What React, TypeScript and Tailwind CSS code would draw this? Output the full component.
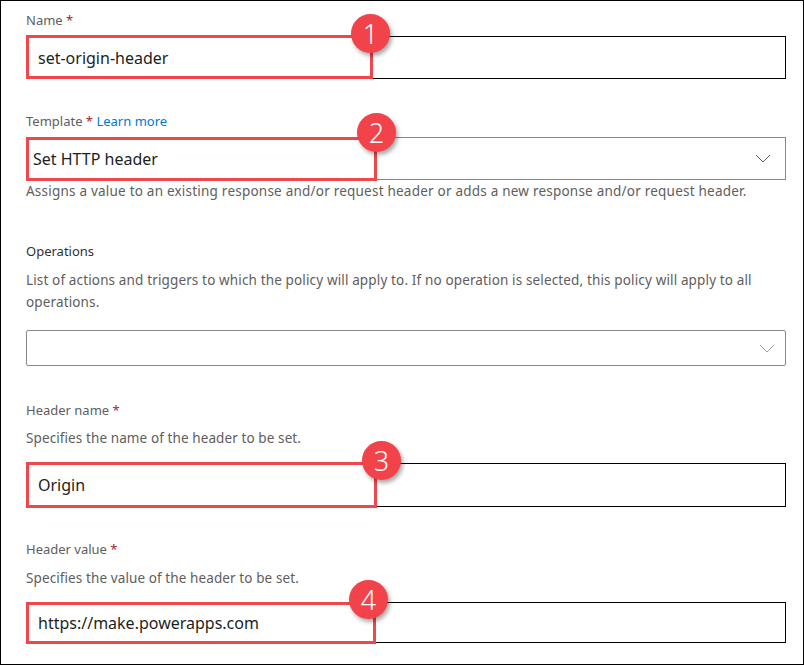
import type { ReactNode } from 'react'

const font = { fontFamily: '"Noto Sans", "Open Sans", Arial, sans-serif' }

function Chevron() {
  return (
    <svg width="16" height="9" viewBox="0 0 16 9" fill="none" className="text-[#605e5c]">
      <polyline points="1,1 8,8 15,1" stroke="currentColor" strokeWidth="1" />
    </svg>
  )
}

function Badge({ n, className }: { n: number; className: string }) {
  return (
    <div
      className={`absolute flex h-[39px] w-[39px] items-center justify-center rounded-full bg-[#f2434a] text-[27px] font-light leading-none text-white shadow-[2px_3px_4px_rgba(0,0,0,0.35)] ${className}`}
    >
      {n}
    </div>
  )
}

function Label({ text, required, children, className = '' }: { text: string; required?: boolean; children?: ReactNode; className?: string }) {
  return (
    <div className={`h-5 text-[13px] leading-5 text-[#605e5c] ${className}`}>
      {text}
      {required && <span className="text-[#a4262c]"> *</span>}
      {children}
    </div>
  )
}

export default function App() {
  return (
    <div style={font} className="box-border h-[665px] w-[804px] border border-black bg-white pl-[25px] pr-[17px] pt-[9px]">
      <Label text="Name" required />
      <div className="relative mt-[6px]">
        <div className="flex h-[43px] items-center border border-black px-[11px] text-[16px] text-[#201f1e]">
          set-origin-header
        </div>
        <div className="absolute left-0 top-[-1px] h-[44px] w-[347px] border-[3px] border-[#f0464c]" />
        <Badge n={1} className="left-[325px] top-[-22px]" />
      </div>

      <Label text="Template" required className="mt-[32px]">
        <span className="text-[#0078d4]"> Learn more</span>
      </Label>
      <div className="relative mt-[6px]">
        <div className="flex h-[43px] items-center justify-between border border-[#8a8886] pl-[6px] pr-[14px] text-[16px] text-[#201f1e]">
          <span>Set HTTP header</span>
          <Chevron />
        </div>
        <div className="absolute left-0 top-0 h-[44px] w-[351px] border-[3px] border-[#f0464c]" />
        <Badge n={2} className="left-[331px] top-[-24px]" />
      </div>
      <div className="mt-[2px] text-[13.5px] leading-[18px] tracking-[0.22px] text-[#605e5c]">
        Assigns a value to an existing response and/or request header or adds a new response and/or request header.
      </div>

      <Label text="Operations" className="mt-[41px] text-[#323130]" />
      <div className="mt-[8px] text-[13.5px] leading-[22px] tracking-[0.14px] text-[#605e5c]">
        List of actions and triggers to which the policy will apply to. If no operation is selected, this policy will apply to all
        <br />
        operations.
      </div>
      <div className="mt-[17px] flex h-[36px] items-center justify-end rounded-[2px] border border-[#8a8886] pr-[10px] text-[#a19f9d]">
        <svg width="16" height="9" viewBox="0 0 16 9" fill="none">
          <polyline points="1,1 8,8 15,1" stroke="currentColor" strokeWidth="1" />
        </svg>
      </div>

      <Label text="Header name" required className="mt-[34px]" />
      <div className="mt-[9px] text-[13.5px] leading-[18px] tracking-[0.1px] text-[#605e5c]">Specifies the name of the header to be set.</div>
      <div className="relative mt-[16px]">
        <div className="flex h-[44px] items-center border border-black px-[11px] text-[16px] text-[#201f1e]">Origin</div>
        <div className="absolute left-0 top-[-1px] h-[46px] w-[351px] border-[3px] border-[#f0464c]" />
        <Badge n={3} className="left-[336px] top-[-22px]" />
      </div>

      <Label text="Header value" required className="mt-[32px]" />
      <div className="mt-[10px] text-[13.5px] leading-[18px] tracking-[0.1px] text-[#605e5c]">Specifies the value of the header to be set.</div>
      <div className="relative mt-[15px]">
        <div className="flex h-[41px] items-center border border-black px-[11px] text-[16px] text-[#201f1e]">
          https://make.powerapps.com
        </div>
        <div className="absolute left-0 top-0 h-[42px] w-[350px] border-[3px] border-[#f0464c]" />
        <Badge n={4} className="left-[323px] top-[-22px]" />
      </div>
    </div>
  )
}
